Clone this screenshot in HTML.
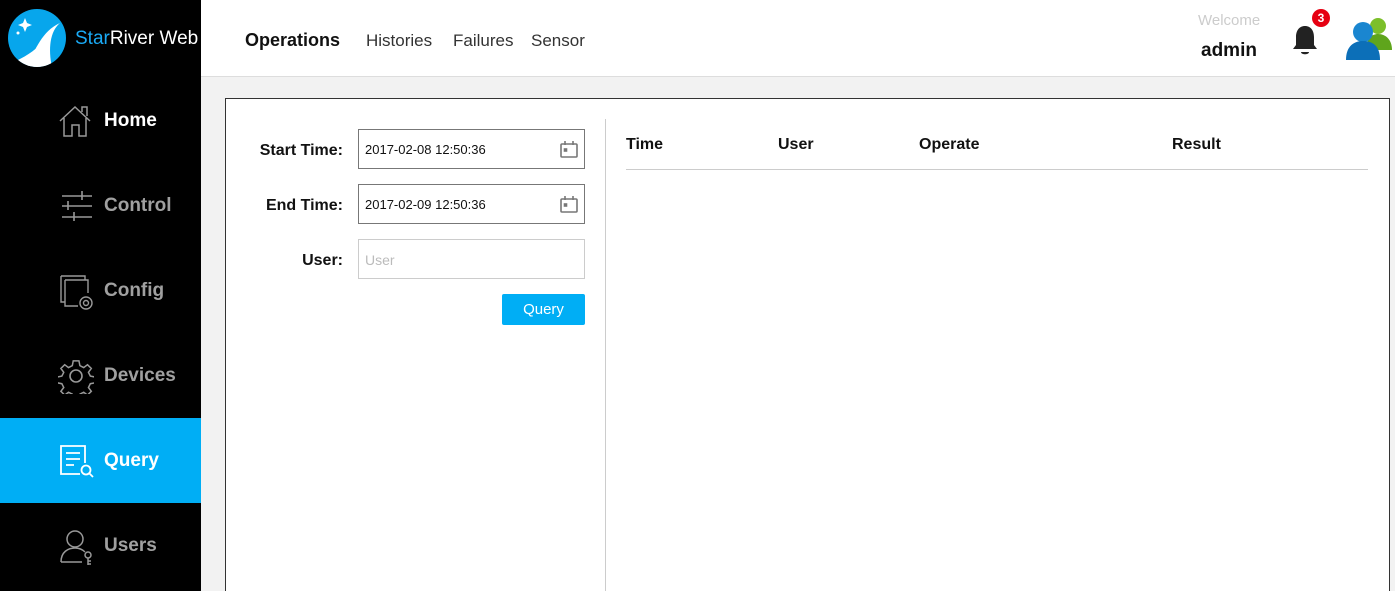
<!DOCTYPE html>
<html><head><meta charset="utf-8"><style>
*{margin:0;padding:0;box-sizing:border-box}
html{width:1395px;height:591px;overflow:hidden}
body{width:1395px;height:591px;overflow:hidden;background:#f2f2f2;font-family:"Liberation Sans","DejaVu Sans",sans-serif;position:relative}
.side{position:absolute;left:0;top:0;width:201px;height:591px;background:#000}
.logo{position:absolute;left:8px;top:9px;width:58px;height:58px;border-radius:50%;background:#07a6ec;overflow:hidden}
.brand{position:absolute;left:75px;top:28px;font-size:19px;color:#fff}
.brand span{color:#1aaaf5}
.item{position:absolute;left:0;width:201px;height:85px;color:#a0a0a0;font-weight:bold;font-size:19px}
.item .t{position:absolute;left:104px;top:32px}
.item svg{position:absolute;left:58px;top:25px}
.item.act{background:#00aef5;color:#fff}
.hdr{position:absolute;left:201px;top:0;width:1194px;height:77px;background:#fff;border-bottom:1px solid #ddd}
.nav{position:absolute;top:31px;font-size:17px;color:#333}
.panel{position:absolute;left:225px;top:98px;width:1165px;height:520px;background:#fff;border:1px solid #333}
.lbl{position:absolute;font-weight:bold;font-size:16px;color:#111;text-align:right;width:117px;left:0}
.inp{position:absolute;left:132px;width:227px;height:40px;border:1px solid #777;font-size:13px;padding:12px 0 0 6px;color:#111}
.cal{position:absolute;right:6px;top:11px}
.th{position:absolute;top:37px;font-weight:bold;font-size:16px;color:#111}
</style></head><body>
<div class="side">
 <div class="logo"><svg width="58" height="58"><path d="M18 58 C28 40 34 22 52 14 C42 22 40 40 44 58Z" fill="#fff"/><path d="M8 52 C20 46 30 40 36 30 C32 42 28 50 22 58Z" fill="#fff"/><path d="M17 9 l2 5 5 2 -5 2 -2 5 -2 -5 -5 -2 5 -2z" fill="#fff"/><circle cx="10" cy="24" r="1.5" fill="#fff"/></svg></div>
 <div class="brand"><span>Star</span>River Web</div>
 <div class="item" style="top:78px;color:#fff"><svg width="36" height="36" viewBox="0 0 36 36" fill="none" stroke="#999" stroke-width="1.5"><path d="M2 18 L17 4 L32 18 M6 15 V33 H14 V22 H21 V33 H28 V15 M24 9 V4 H29 V13"/></svg><div class="t">Home</div></div>
 <div class="item" style="top:163px"><svg width="36" height="36" viewBox="0 0 36 36" fill="none" stroke="#999" stroke-width="1.6"><path d="M4 8 H34 M24 3 V12 M4 18 H34 M10 13 V22 M4 29 H34 M16 24 V33"/></svg><div class="t">Control</div></div>
 <div class="item" style="top:248px"><svg width="38" height="38" viewBox="0 0 38 38" fill="none" stroke="#999" stroke-width="1.4"><path d="M3 3 H27 V7 M3 3 V29 H7 M7 7 H30 V20 M7 7 V33 H20"/><circle cx="28" cy="30" r="6"/><circle cx="28" cy="30" r="2.5"/></svg><div class="t">Config</div></div>
 <div class="item" style="top:333px"><svg width="36" height="36" viewBox="0 0 36 36" fill="none" stroke="#999" stroke-width="1.6"><path d="M15 2h6l1 5 4 2 4-3 4 4-3 4 2 4 5 1v6l-5 1-2 4 3 4-4 4-4-3-4 2-1 5h-6l-1-5-4-2-4 3-4-4 3-4-2-4-5-1v-6l5-1 2-4-3-4 4-4 4 3 4-2z" transform="translate(1 1) scale(.95)"/><circle cx="18" cy="18" r="6"/></svg><div class="t">Devices</div></div>
 <div class="item act" style="top:418px"><svg width="36" height="36" viewBox="0 0 36 36" fill="none" stroke="#fff" stroke-width="1.8"><path d="M22 31 H3 V3 H27 V20 M8 10 H22 M8 16 H22 M8 22 H16"/><circle cx="28" cy="27" r="4.5"/><path d="M31 30 L35 34"/></svg><div class="t">Query</div></div>
 <div class="item" style="top:503px"><svg width="38" height="38" viewBox="0 0 38 38" fill="none" stroke="#999" stroke-width="1.5"><circle cx="17" cy="11" r="8"/><path d="M3 34 C3 24 10 20 17 20 C22 20 25 22 27 24 M3 34 H24"/><circle cx="30" cy="27" r="3"/><path d="M30 30 V37 M30 33 H33 M30 36 H33"/></svg><div class="t">Users</div></div>
</div>
<div class="hdr">
 <div class="nav" style="left:44px;font-weight:bold;font-size:18px;top:30px;color:#111">Operations</div>
 <div class="nav" style="left:165px">Histories</div>
 <div class="nav" style="left:252px">Failures</div>
 <div class="nav" style="left:330px">Sensor</div>
 <div style="position:absolute;left:997px;top:12px;font-size:15px;color:#ccc">Welcome</div>
 <div style="position:absolute;left:1000px;top:40px;font-size:19px;font-weight:bold;color:#111">admin</div>
 <svg style="position:absolute;left:1090px;top:24px" width="28" height="34" viewBox="0 0 28 34"><path d="M14 2 C8 2 5 7 5 13 V21 L2 25 H26 L23 21 V13 C23 7 20 2 14 2Z" fill="#222"/><path d="M10 28 H18 C18 31 10 31 10 28Z" fill="#222"/></svg>
 <div style="position:absolute;left:1111px;top:9px;width:18px;height:18px;border-radius:50%;background:#e60012;color:#fff;font-size:12px;font-weight:bold;text-align:center;line-height:18px">3</div>
 <svg style="position:absolute;left:1145px;top:14px" width="48" height="48" viewBox="0 0 48 48"><circle cx="32" cy="12" r="8" fill="#7cbf2a"/><path d="M20 36 C20 24 26 20 32 20 C40 20 46 26 46 36Z" fill="#5fa51c"/><circle cx="17" cy="18" r="10" fill="#1a86d0"/><path d="M0 46 C0 32 8 27 17 27 C27 27 34 32 34 46Z" fill="#0c6fb8"/></svg>
</div>
<div class="panel">
 <div class="lbl" style="top:43px">Start Time:</div>
 <div class="inp" style="top:30px">2017-02-08 12:50:36<svg class="cal" width="18" height="17" viewBox="0 0 18 17" fill="none" stroke="#777" stroke-width="1.6"><rect x="1" y="3" width="16" height="13" rx="1"/><path d="M5 0 V4 M13 0 V4"/><rect x="4.5" y="8" width="2" height="2" fill="#777"/></svg></div>
 <div class="lbl" style="top:98px">End Time:</div>
 <div class="inp" style="top:85px">2017-02-09 12:50:36<svg class="cal" width="18" height="17" viewBox="0 0 18 17" fill="none" stroke="#777" stroke-width="1.6"><rect x="1" y="3" width="16" height="13" rx="1"/><path d="M5 0 V4 M13 0 V4"/><rect x="4.5" y="8" width="2" height="2" fill="#777"/></svg></div>
 <div class="lbl" style="top:153px">User:</div>
 <div class="inp" style="top:140px;border-color:#ccc;color:#bbb;font-size:14px">User</div>
 <div style="position:absolute;left:276px;top:195px;width:83px;height:31px;background:#00aef5;border-radius:2px;color:#fff;font-size:15px;text-align:center;line-height:31px">Query</div>
 <div style="position:absolute;left:379px;top:20px;width:1px;height:500px;background:#ccc"></div>
 <div class="th" style="left:400px">Time</div>
 <div class="th" style="left:552px">User</div>
 <div class="th" style="left:693px">Operate</div>
 <div class="th" style="left:946px">Result</div>
 <div style="position:absolute;left:400px;top:70px;width:742px;height:1px;background:#ccc"></div>
</div>
</body></html>
